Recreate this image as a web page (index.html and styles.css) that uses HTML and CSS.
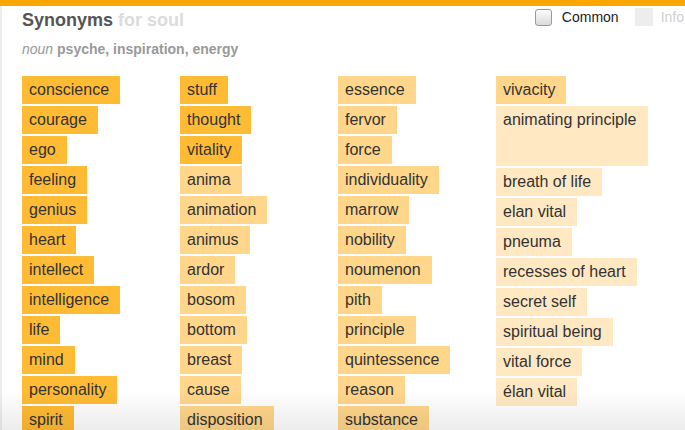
FILE: index.html
```html
<!DOCTYPE html>
<html>
<head>
<meta charset="utf-8">
<link rel="stylesheet" href="styles.css">
</head>
<body>
<div class="topbar"></div>
<div class="page">
  <header class="header">
    <div class="heading">
      <h1 class="title">Synonyms <span class="for">for soul</span></h1>
      <p class="sense"><em>noun</em> <strong>psyche, inspiration, energy</strong></p>
    </div>
    <div class="controls">
      <span class="checkbox"></span>
      <span class="common">Common</span>
      <span class="infobox"></span>
      <span class="info">Info</span>
    </div>
  </header>
  <main class="grid">
    <div class="col">
      <span class="chip c1">conscience</span>
      <span class="chip c1">courage</span>
      <span class="chip c1">ego</span>
      <span class="chip c1">feeling</span>
      <span class="chip c1">genius</span>
      <span class="chip c1">heart</span>
      <span class="chip c1">intellect</span>
      <span class="chip c1">intelligence</span>
      <span class="chip c1">life</span>
      <span class="chip c1">mind</span>
      <span class="chip c1">personality</span>
      <span class="chip c1">spirit</span>
    </div>
    <div class="col">
      <span class="chip c1">stuff</span>
      <span class="chip c1">thought</span>
      <span class="chip c1">vitality</span>
      <span class="chip c2">anima</span>
      <span class="chip c2">animation</span>
      <span class="chip c2">animus</span>
      <span class="chip c2">ardor</span>
      <span class="chip c2">bosom</span>
      <span class="chip c2">bottom</span>
      <span class="chip c2">breast</span>
      <span class="chip c2">cause</span>
      <span class="chip c2">disposition</span>
    </div>
    <div class="col">
      <span class="chip c2">essence</span>
      <span class="chip c2">fervor</span>
      <span class="chip c2">force</span>
      <span class="chip c2">individuality</span>
      <span class="chip c2">marrow</span>
      <span class="chip c2">nobility</span>
      <span class="chip c2">noumenon</span>
      <span class="chip c2">pith</span>
      <span class="chip c2">principle</span>
      <span class="chip c2">quintessence</span>
      <span class="chip c2">reason</span>
      <span class="chip c2">substance</span>
    </div>
    <div class="col">
      <span class="chip c2">vivacity</span>
      <span class="chip c3 tall">animating principle</span>
      <span class="chip c3">breath of life</span>
      <span class="chip c3">elan vital</span>
      <span class="chip c3">pneuma</span>
      <span class="chip c3">recesses of heart</span>
      <span class="chip c3">secret self</span>
      <span class="chip c3">spiritual being</span>
      <span class="chip c3">vital force</span>
      <span class="chip c3">élan vital</span>
    </div>
  </main>
</div>
<div class="fade"></div>
</body>
</html>
```

FILE: styles.css
```css
html, body {
  margin: 0;
  padding: 0;
  height: 100%;
  overflow: hidden;
  background: #fff;
  font-family: "Liberation Sans", Arial, Helvetica, sans-serif;
}

.topbar {
  height: 6px;
  background: #ffa500;
}

.page {
  border-left: 2px solid #eeeeee;
  padding-left: 20px;
  min-height: 100%;
  box-sizing: border-box;
}

.header {
  display: flex;
  justify-content: space-between;
  align-items: flex-start;
}

.title {
  margin: 3px 0 0;
  font-size: 18px;
  line-height: 22px;
  font-weight: bold;
  color: #555;
}

.for {
  color: #dcdcdc;
}

.sense {
  margin: 9px 0 0;
  font-size: 14px;
  line-height: 18px;
  color: #999;
}

.sense em {
  font-style: italic;
}

.sense strong {
  font-weight: bold;
}

.controls {
  display: flex;
  align-items: center;
  margin-top: 2px;
  margin-right: 1px;
  font-size: 14px;
  height: 18px;
}

.checkbox {
  width: 15px;
  height: 15px;
  border: 1px solid #9a9a9a;
  border-radius: 3px;
  background: linear-gradient(#fdfdfd, #dadada);
  box-sizing: content-box;
}

.common {
  margin-left: 10px;
  color: #222;
}

.infobox {
  width: 18px;
  height: 18px;
  margin-left: 16px;
  background: #ededed;
}

.info {
  margin-left: 8px;
  color: #cfcfcf;
}

.grid {
  display: grid;
  grid-template-columns: repeat(4, 152px);
  column-gap: 6px;
  margin-top: 18px;
}

.col {
  display: flex;
  flex-direction: column;
  align-items: flex-start;
  gap: 2px;
}

.chip {
  display: block;
  height: 28px;
  line-height: 28px;
  padding: 0 11px 0 7px;
  font-size: 16px;
  color: #333;
  white-space: nowrap;
}

.c1 { background: #ffbb33; }
.c2 { background: #ffd68a; }
.c3 { background: #ffe8c2; }

.tall {
  height: 60px;
  width: 152px;
  box-sizing: border-box;
}

.fade {
  position: fixed;
  left: 0;
  right: 0;
  bottom: 0;
  height: 40px;
  background: linear-gradient(rgba(0, 0, 0, 0), rgba(0, 0, 0, 0.075));
  pointer-events: none;
}
```
